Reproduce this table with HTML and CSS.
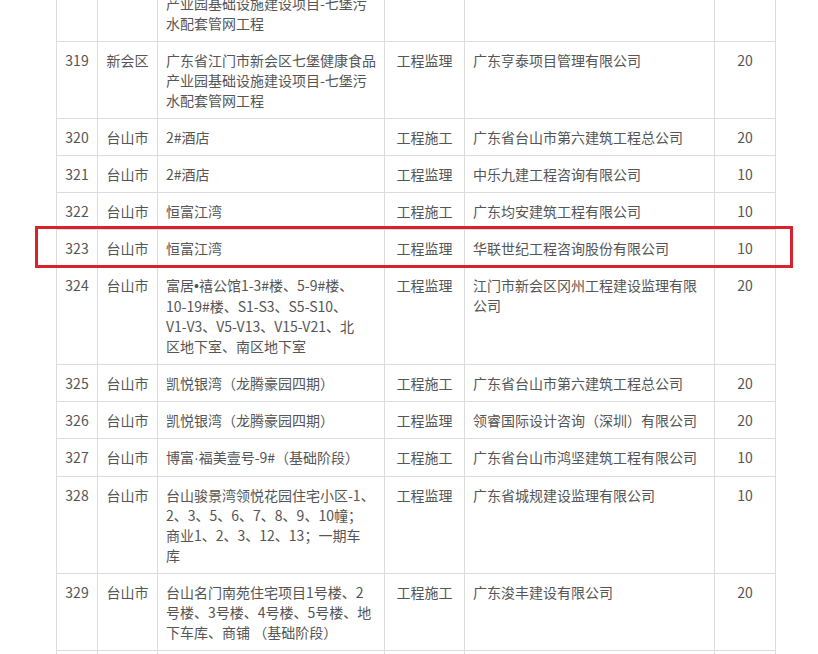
FILE: index.html
```html
<!DOCTYPE html>
<html lang="zh-CN">
<head>
<meta charset="utf-8">
<title>名单</title>
<link rel="stylesheet" href="styles.css">
</head>
<body>
<div class="wrap">
<table class="list">
<colgroup>
<col class="c-no"><col class="c-area"><col class="c-proj"><col class="c-type"><col class="c-co"><col class="c-score">
</colgroup>
<tbody>
<tr><td class="ctr">318</td><td class="ctr">新会区</td><td>广东省江门市新会区七堡健康食品产业园基础设施建设项目-七堡污水配套管网工程</td><td class="ctr">工程施工</td><td>广东省台山市第六建筑工程总公司</td><td class="ctr">20</td></tr>
<tr><td class="ctr">319</td><td class="ctr">新会区</td><td>广东省江门市新会区七堡健康食品产业园基础设施建设项目-七堡污水配套管网工程</td><td class="ctr">工程监理</td><td>广东亨泰项目管理有限公司</td><td class="ctr">20</td></tr>
<tr><td class="ctr">320</td><td class="ctr">台山市</td><td>2#酒店</td><td class="ctr">工程施工</td><td>广东省台山市第六建筑工程总公司</td><td class="ctr">20</td></tr>
<tr><td class="ctr">321</td><td class="ctr">台山市</td><td>2#酒店</td><td class="ctr">工程监理</td><td>中乐九建工程咨询有限公司</td><td class="ctr">10</td></tr>
<tr><td class="ctr">322</td><td class="ctr">台山市</td><td>恒富江湾</td><td class="ctr">工程施工</td><td>广东均安建筑工程有限公司</td><td class="ctr">10</td></tr>
<tr><td class="ctr mark-cell">323<span class="mark"></span></td><td class="ctr">台山市</td><td>恒富江湾</td><td class="ctr">工程监理</td><td>华联世纪工程咨询股份有限公司</td><td class="ctr">10</td></tr>
<tr><td class="ctr">324</td><td class="ctr">台山市</td><td>富居<span class="dot">•</span>禧公馆1-3#楼、5-9#楼、<br>10-19#楼、S1-S3、S5-S10、<br>V1-V3、V5-V13、V15-V21、北<br>区地下室、南区地下室</td><td class="ctr">工程监理</td><td>江门市新会区冈州工程建设监理有限公司</td><td class="ctr">20</td></tr>
<tr><td class="ctr">325</td><td class="ctr">台山市</td><td>凯悦银湾（龙腾豪园四期）</td><td class="ctr">工程施工</td><td>广东省台山市第六建筑工程总公司</td><td class="ctr">20</td></tr>
<tr><td class="ctr">326</td><td class="ctr">台山市</td><td>凯悦银湾（龙腾豪园四期）</td><td class="ctr">工程监理</td><td>领睿国际设计咨询（深圳）有限公司</td><td class="ctr">20</td></tr>
<tr><td class="ctr">327</td><td class="ctr">台山市</td><td>博富<span class="dot">·</span>福美壹号-9#（基础阶段）</td><td class="ctr">工程施工</td><td>广东省台山市鸿坚建筑工程有限公司</td><td class="ctr">10</td></tr>
<tr><td class="ctr">328</td><td class="ctr">台山市</td><td>台山骏景湾领悦花园住宅小区-1、<br>2、3、5、6、7、8、9、10幢；<br>商业1、2、3、12、13；一期车<br>库</td><td class="ctr">工程监理</td><td>广东省城规建设监理有限公司</td><td class="ctr">10</td></tr>
<tr><td class="ctr">329</td><td class="ctr">台山市</td><td>台山名门南苑住宅项目1号楼、2号楼、3号楼、4号楼、5号楼、地下车库、商铺 （基础阶段）</td><td class="ctr">工程施工</td><td>广东浚丰建设有限公司</td><td class="ctr">20</td></tr>
<tr><td class="ctr">330</td><td class="ctr">台山市</td><td>台山名门南苑住宅项目</td><td class="ctr">工程监理</td><td>广东省城规建设监理有限公司</td><td class="ctr">20</td></tr>
</tbody>
</table>
</div>
</body>
</html>
```

FILE: styles.css
```css
html, body {
  margin: 0;
  padding: 0;
  background: #fff;
}
body {
  font-family: "Noto Sans CJK SC", "Microsoft YaHei", sans-serif;
  font-size: 14px;
  line-height: 20px;
  color: #555;
  overflow: hidden;
}
.wrap {
  padding-left: 56px;
  margin-top: -36px;
}
.list {
  border-collapse: collapse;
  table-layout: fixed;
  width: 719px;
}
.c-no { width: 41px; }
.c-area { width: 60px; }
.c-proj { width: 227px; }
.c-type { width: 80px; }
.c-co { width: 250px; }
.c-score { width: 61px; }
.list td {
  border: 1px solid #dcdcdc;
  padding: 8px 8px;
  vertical-align: top;
  text-align: left;
}
.list td.ctr {
  text-align: center;
  padding-left: 2px;
  padding-right: 2px;
}
.dot {
  font-family: "Liberation Sans", Arial, sans-serif;
}
.mark-cell {
  position: relative;
}
.mark {
  position: absolute;
  left: -22px;
  top: -4px;
  width: 758px;
  height: 42px;
  box-sizing: border-box;
  border: 3px solid #d8232c;
  pointer-events: none;
}
```
